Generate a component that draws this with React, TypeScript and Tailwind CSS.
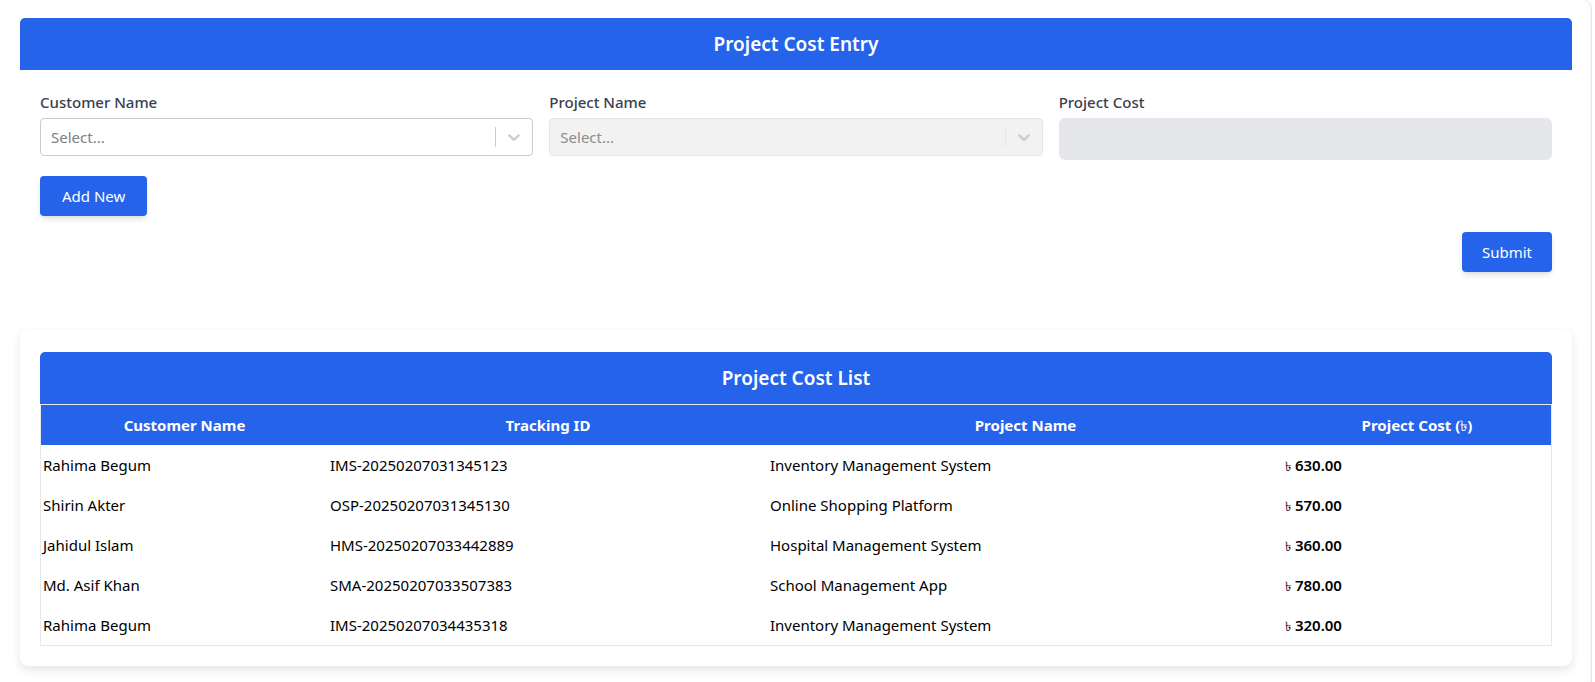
import React from "react";

type Row = { customer: string; tracking: string; project: string; cost: string };

const rows: Row[] = [
  { customer: "Rahima Begum", tracking: "IMS-20250207031345123", project: "Inventory Management System", cost: "630.00" },
  { customer: "Shirin Akter", tracking: "OSP-20250207031345130", project: "Online Shopping Platform", cost: "570.00" },
  { customer: "Jahidul Islam", tracking: "HMS-20250207033442889", project: "Hospital Management System", cost: "360.00" },
  { customer: "Md. Asif Khan", tracking: "SMA-20250207033507383", project: "School Management App", cost: "780.00" },
  { customer: "Rahima Begum", tracking: "IMS-20250207034435318", project: "Inventory Management System", cost: "320.00" },
];

function Chevron({ color }: { color: string }) {
  return (
    <svg viewBox="0 0 20 20" width="20" height="20" aria-hidden="true" focusable="false" style={{ fill: color }}>
      <path d="M4.516 7.548c0.436-0.446 1.043-0.481 1.576 0l3.908 3.747 3.908-3.747c0.533-0.481 1.141-0.446 1.574 0 0.436 0.445 0.408 1.197 0 1.615-0.406 0.418-4.695 4.502-4.695 4.502-0.217 0.223-0.502 0.335-0.787 0.335s-0.57-0.112-0.789-0.335c0 0-4.287-4.084-4.695-4.502s-0.436-1.170 0-1.615z" />
    </svg>
  );
}

function SelectBox({ disabled }: { disabled?: boolean }) {
  return (
    <div
      className={
        disabled
          ? "flex h-[38px] items-center rounded-[4px] border border-[#e6e6e6] bg-[#f2f2f2]"
          : "flex h-[38px] items-center rounded-[4px] border border-[#cccccc] bg-white"
      }
    >
      <div className={disabled ? "flex-1 px-[10px] text-[15px] text-[#8c8c8c]" : "flex-1 px-[10px] text-[15px] text-[#808080]"}>
        Select...
      </div>
      <span className={disabled ? "h-5 w-px bg-[#e6e6e6]" : "h-5 w-px bg-[#cccccc]"} />
      <div className="flex items-center p-2">
        <Chevron color="#cccccc" />
      </div>
    </div>
  );
}

export default function App() {
  return (
    <div className="min-h-[682px] w-[1592px] rounded-tr-lg border-r border-[#e2e4e8] bg-white pl-5 pr-[19px] pt-[18px] font-['Noto_Sans',sans-serif] shadow-[inset_-4px_0_6px_-4px_rgba(0,0,0,0.06)]">
      {/* Entry section */}
      <div>
        <div className="rounded-t-[5px] bg-[#2563eb] py-3 text-center text-[19px] font-semibold leading-7 text-white">
          Project Cost Entry
        </div>
        <div className="p-5">
          <div className="grid grid-cols-3 items-start gap-4">
            <div>
              <label className="mb-1 block text-[15px] font-medium leading-6 text-[#374151]">Customer Name</label>
              <SelectBox />
            </div>
            <div>
              <label className="mb-1 block text-[15px] font-medium leading-6 text-[#374151]">Project Name</label>
              <SelectBox disabled />
            </div>
            <div>
              <label className="mb-1 block text-[15px] font-medium leading-6 text-[#374151]">Project Cost</label>
              <div className="h-[42px] rounded-md bg-[#e5e7eb]" />
            </div>
          </div>
          <button className="mt-4 rounded-[4px] bg-[#2563eb] px-[22px] py-2 text-[15px] leading-6 text-white shadow-md">
            Add New
          </button>
          <div className="mt-4 flex justify-end">
            <button className="rounded-[4px] bg-[#2563eb] px-5 py-2 text-[15px] leading-6 text-white shadow-md">
              Submit
            </button>
          </div>
        </div>
      </div>

      {/* List section */}
      <div className="mt-[38px] rounded-lg bg-white px-5 pb-5 pt-[22px] shadow-[0_4px_10px_rgba(0,0,0,0.10)]">
        <div className="rounded-t-[5px] bg-[#2563eb] py-3 text-center text-[19px] font-semibold leading-7 text-white">
          Project Cost List
        </div>
        <table className="w-full table-fixed border-separate border-spacing-0 border border-[#e5e7eb]">
          <colgroup>
            <col className="w-[287px]" />
            <col className="w-[440px]" />
            <col className="w-[515px]" />
            <col className="w-[268px]" />
          </colgroup>
          <thead>
            <tr className="h-10 bg-[#2563eb] text-[15px] font-bold text-white">
              <th className="px-0.5 text-center">Customer Name</th>
              <th className="px-0.5 text-center">Tracking ID</th>
              <th className="px-0.5 text-center">Project Name</th>
              <th className="px-0.5 text-center">
                Project Cost (<span className="font-normal">৳</span>)
              </th>
            </tr>
          </thead>
          <tbody className="text-[15px] text-black">
            {rows.map((r, i) => (
              <tr key={i} className="h-10">
                <td className="px-0.5 text-left">{r.customer}</td>
                <td className="px-0.5 text-left">{r.tracking}</td>
                <td className="px-0.5 text-left">{r.project}</td>
                <td className="px-0.5 text-left font-semibold">
                  <span className="text-[13px] font-normal">৳</span> {r.cost}
                </td>
              </tr>
            ))}
          </tbody>
        </table>
      </div>
    </div>
  );
}
